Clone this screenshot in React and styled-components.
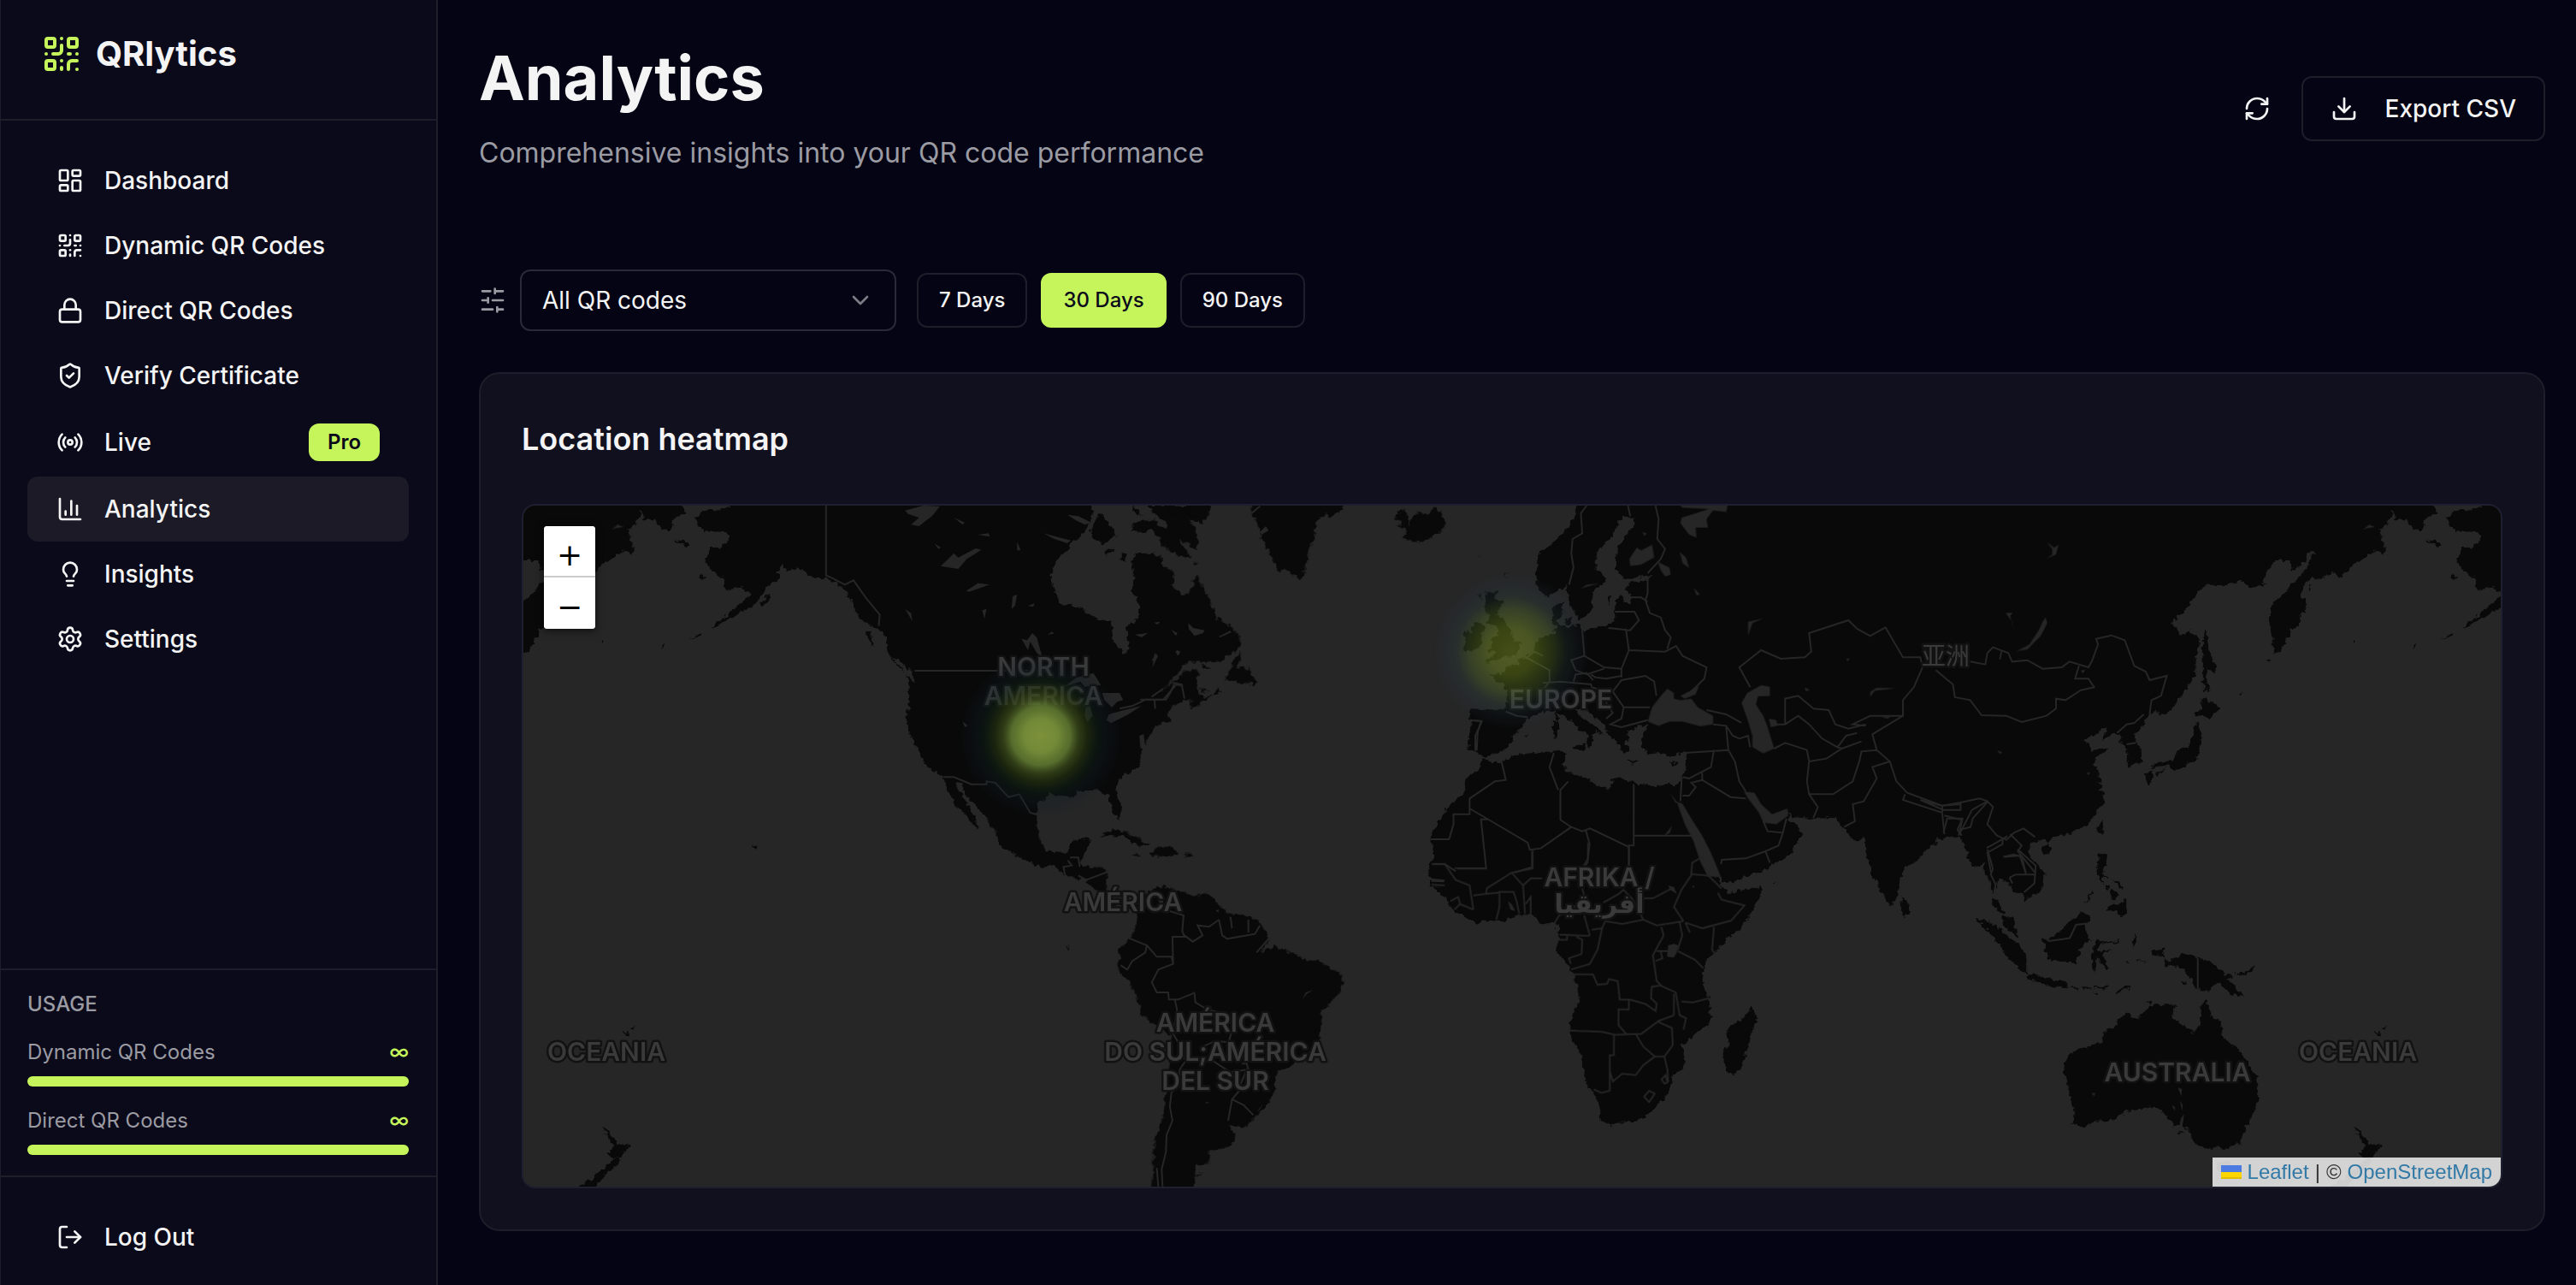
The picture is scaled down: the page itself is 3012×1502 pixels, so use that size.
import React, { useState } from 'react';
import styled, { createGlobalStyle, ThemeProvider } from 'styled-components';
import {
  ChartColumn,
  ChevronDown,
  Download,
  LayoutDashboard,
  Lightbulb,
  Lock,
  LogOut,
  QrCode,
  Radio,
  RefreshCw,
  Settings,
  ShieldCheck,
} from 'lucide-react';

const theme = {
  colors: {
    page: '#050414',
    sidebar: '#0b0a1a',
    card: '#11101f',
    active: '#1b1a26',
    line: '#1e1d2a',
    control: '#2a293b',
    text: '#f4f4f5',
    muted: '#9b9ba3',
    lime: '#c5f55a',
    ink: '#0b0a1a',
    sea: '#262626',
    land: '#090909',
    label: '#3a3a3a',
  },
  radius: '12px',
};

const GlobalStyle = createGlobalStyle`
  * {
    box-sizing: border-box;
    margin: 0;
  }

  body {
    background: ${theme.colors.page};
    color: ${theme.colors.text};
    font-family: Inter, sans-serif;
    font-size: 28px;
    line-height: 40px;
  }

  button,
  select {
    font: inherit;
    color: inherit;
    cursor: pointer;
  }

  a {
    color: inherit;
    text-decoration: none;
  }

  svg {
    flex-shrink: 0;
  }
`;

const Layout = styled.div`
  display: grid;
  grid-template-columns: 512px minmax(0, 1fr);
  min-height: 100vh;
`;

/* sidebar */

const Sidebar = styled.aside`
  display: flex;
  flex-direction: column;
  height: 100vh;
  background: ${props => props.theme.colors.sidebar};
  border-right: 2px solid ${props => props.theme.colors.line};
  box-shadow: inset 1px 0 0 ${props => props.theme.colors.line};
`;

const Brand = styled.header`
  display: flex;
  align-items: center;
  gap: 16px;
  height: 141px;
  padding: 0 48px 14px;
  border-bottom: 2px solid ${props => props.theme.colors.line};
  font-size: 40px;
  font-weight: 700;

  svg {
    color: ${props => props.theme.colors.lime};
  }
`;

const Nav = styled.nav`
  flex: 1;
  padding: 32px;
`;

const NavItem = styled.a`
  display: flex;
  align-items: center;
  gap: 24px;
  padding: 16px 32px;
  border: 2px solid transparent;
  border-radius: ${props => props.theme.radius};
  background: ${props => (props.$active ? props.theme.colors.active : 'none')};
  background-clip: border-box;
  font-weight: 500;
`;

const Badge = styled.span`
  margin-left: auto;
  padding: 0 22px;
  border-radius: ${props => props.theme.radius};
  background: ${props => props.theme.colors.lime};
  color: ${props => props.theme.colors.ink};
  font-size: 24px;
  font-weight: 600;
  line-height: 44px;
`;

const Usage = styled.section`
  display: grid;
  gap: 24px;
  padding: 24px 32px;
  border-top: 2px solid ${props => props.theme.colors.line};
  color: ${props => props.theme.colors.muted};
  font-size: 24px;
  line-height: 32px;
`;

const UsageTitle = styled.h2`
  font-size: 24px;
  font-weight: 500;
`;

const Meter = styled.div`
  display: grid;
  gap: 12px;
`;

const MeterRow = styled.div`
  display: flex;
  justify-content: space-between;
`;

const MeterValue = styled.span`
  color: ${props => props.theme.colors.lime};
  font-weight: 500;
`;

const Track = styled.div`
  height: 12px;
  border-radius: 6px;
  background: ${props => props.theme.colors.active};
`;

const Fill = styled.div`
  height: 100%;
  border-radius: inherit;
  background: ${props => props.theme.colors.lime};
`;

const Footer = styled.footer`
  padding: 32px 32px 18px;
  border-top: 2px solid ${props => props.theme.colors.line};
`;

/* main column */

const Main = styled.main`
  padding: 51px 36px 48px 48px;
`;

const Header = styled.header`
  display: flex;
  align-items: center;
  justify-content: space-between;
  margin-bottom: 112px;
`;

const Title = styled.h1`
  margin-bottom: 24px;
  font-size: 72px;
  font-weight: 700;
  line-height: 80px;
`;

const Subtitle = styled.p`
  color: ${props => props.theme.colors.muted};
  font-size: 32px;
  line-height: 48px;
`;

const Actions = styled.div`
  display: flex;
  align-items: center;
  gap: 16px;
`;

const IconButton = styled.button`
  display: flex;
  padding: 20px;
  border: 0;
  background: none;
`;

const ExportButton = styled.button`
  display: flex;
  align-items: center;
  gap: 32px;
  padding: 16px 32px;
  border: 2px solid ${props => props.theme.colors.line};
  border-radius: ${props => props.theme.radius};
  background: none;
  font-weight: 500;
`;

const Filters = styled.div`
  display: flex;
  align-items: center;
  gap: 16px;
  margin-bottom: 48px;
  color: ${props => props.theme.colors.muted};
`;

const SelectBox = styled.label`
  position: relative;
  width: 440px;
  margin-right: 8px;

  svg {
    position: absolute;
    top: 20px;
    right: 26px;
    opacity: 0.8;
    pointer-events: none;
  }
`;

const Select = styled.select`
  width: 100%;
  height: 72px;
  padding: 0 24px;
  appearance: none;
  border: 2px solid ${props => props.theme.colors.control};
  border-radius: ${props => props.theme.radius};
  background: ${props => props.theme.colors.page};
  color: ${props => props.theme.colors.text};
`;

const RangeButton = styled.button`
  height: 64px;
  padding: 0 24px;
  border: 2px solid
    ${props => (props.$active ? props.theme.colors.lime : props.theme.colors.line)};
  border-radius: ${props => props.theme.radius};
  background: ${props => (props.$active ? props.theme.colors.lime : 'none')};
  color: ${props =>
    props.$active ? props.theme.colors.ink : props.theme.colors.text};
  font-size: 24px;
  font-weight: 500;
`;

const Card = styled.section`
  padding: 48px;
  border: 2px solid ${props => props.theme.colors.line};
  border-radius: 24px;
  background: ${props => props.theme.colors.card};
`;

const CardTitle = styled.h2`
  margin-bottom: 48px;
  font-size: 36px;
  font-weight: 600;
  line-height: 56px;
`;

/* map */

const MapFrame = styled.div`
  position: relative;
  height: 800px;
  overflow: hidden;
  border: 2px solid #201f30;
  border-radius: 16px;
  background: ${props => props.theme.colors.sea};
`;

const MapSvg = styled.svg`
  display: block;
  width: 100%;
  height: 100%;

  .land {
    fill: ${props => props.theme.colors.land};
  }

  .water {
    fill: ${props => props.theme.colors.sea};
  }

  .borders {
    fill: none;
    stroke: ${props => props.theme.colors.sea};
    stroke-width: 2px;
  }

  .borders path {
    vector-effect: non-scaling-stroke;
  }
`;

const MapLabel = styled.text`
  fill: ${props => props.theme.colors.label};
  stroke: #121212;
  stroke-width: 5px;
  stroke-linejoin: round;
  paint-order: stroke;
  font-family: Inter, 'Noto Sans CJK SC', 'DejaVu Sans', sans-serif;
  font-size: ${props => (props.$light ? 28 : 30)}px;
  font-weight: ${props => (props.$light ? 400 : 600)};
  text-anchor: middle;
`;

const ZoomControl = styled.div`
  position: absolute;
  top: 24px;
  left: 24px;
  display: grid;
  width: 60px;
  overflow: hidden;
  border-radius: 4px;
  background: #fff;
  box-shadow: 0 2px 10px rgba(0, 0, 0, 0.65);
`;

const ZoomButton = styled.button`
  height: 60px;
  padding: 10px 0 0;
  border: 0;
  background: #fff;
  color: #000;
  font-family: 'DejaVu Sans', sans-serif;
  font-size: 36px;
  line-height: 48px;

  &:first-child {
    border-bottom: 2px solid #ccc;
  }
`;

const Attribution = styled.div`
  position: absolute;
  right: 0;
  bottom: 0;
  display: flex;
  align-items: center;
  gap: 7px;
  height: 34px;
  padding: 0 10px;
  background: rgba(255, 255, 255, 0.8);
  color: #333;
  font-family: 'Liberation Sans', sans-serif;
  font-size: 24px;

  a {
    color: #3179a6;
  }
`;

// Mercator world, 2048 units wide, digitised in sheets. Every sheet keeps
// its own grid and is placed in the world by its transform.
const sheets = [
  {
    id: 'north-america',
    transform: 'translate(600 580) scale(.5102 .33333)',
    land: `M500 33L480 45 440 50 415 75 435 120 490 122 497 150 475 180 450 180 440 230 455 260 480 290 485 330 520 320 540 330 545 345 530 365 500 405 453 462 475 450 520 410 560 370 580 320 610 290 615 275 603 268 617 238 627 262 650 250 670 270 690 285 720 290 740 305 765 340 785 400 800 440 825 455 850 480 855 510 862 560 890 600 905 635 908 700 903 770 905 820 925 880 945 945 985 985 1000 1040 1015 1090 1040 1120 1065 1172 1060 1140 1045 1090 1030 1050 1012 1005 1030 1010 1040 1055 1070 1100 1110 1160 1112 1220 1150 1255 1215 1300 1240 1290 1262 1330 1305 1330 1300 1270 1315 1240 1320 1200 1285 1205 1270 1250 1240 1260 1215 1235 1200 1190 1200 1110 1205 1075 1230 1045 1285 1055 1290 1035 1340 1030 1365 1050 1375 1110 1390 1130 1395 1090 1382 1040 1385 1000 1410 970 1440 935 1440 860 1460 830 1465 805 1485 790 1485 210 1455 200 1430 200 1415 230 1425 290 1415 330 1435 380 1435 420 1405 460 1412 530 1400 555 1375 500 1370 440 1340 435 1310 400 1275 378 1258 385 1240 330 1232 290 1245 225 1275 185 1278 160 1300 145 1320 100 1330 50 1325 20H500Z
      M1345 60L1365 100 1385 140 1365 150 1350 172 1330 150 1322 120Z
      M1420 95L1445 85 1465 110 1450 125 1420 125ZM1395 195L1404 205 1402 228 1395 222ZM1355 195L1368 180 1375 188 1360 210Z
      M1418 33L1440 65 1425 60ZM1450 33L1568 33 1568 90 1500 75 1480 60Z
      M423 283L435 275 443 288 430 291ZM372 155L388 155 405 172 400 178ZM565 375L588 345 592 352 572 388ZM808 472L818 475 826 527 815 510ZM862 565L885 575 915 620 922 658 905 630Z
      M405 505L430 478 434 485ZM335 530L350 522 345 530ZM200 505L208 507 205 511ZM548 1220L562 1232 556 1245ZM525 1198L530 1200ZM543 1210L548 1214ZM1415 1130L1422 1155ZM1425 1100L1430 1115Z
      M1345 1190L1375 1170 1400 1180 1460 1222 1428 1224 1405 1195Z`,
    water: `M898 50L940 33 978 35 960 70 930 105 912 100 930 75 905 62ZM980 245L1010 200 1020 215 1060 183 1073 188 1040 220 1020 255ZM1038 332L1065 305 1092 310 1065 325 1045 335ZM1165 500L1178 505 1190 480 1200 495 1213 565 1200 550 1185 510 1180 540ZM1263 668L1290 637 1330 620 1347 662 1310 668 1300 650ZM1312 740L1322 732 1328 770 1316 792 1310 770ZM1350 690L1390 690 1398 715 1385 720 1372 740 1355 715ZM1360 785L1365 765 1400 750 1440 735 1410 765 1370 796ZM1145 350L1155 345 1150 385 1142 395ZM1180 385L1195 375 1192 388ZM1075 400L1085 395 1080 430ZM965 165L980 180 975 185ZM1155 160L1163 190 1155 190ZM1065 135L1090 130 1092 142ZM1215 130L1278 155 1270 165 1240 150ZM1270 65L1295 70 1325 92 1310 100 1290 85ZM1425 485L1455 480 1440 495ZM1470 550L1478 560 1465 600ZM1520 540L1530 545 1523 555ZM1030 790L1042 805 1035 810ZM1435 840L1445 835 1448 870 1438 885ZM898 395L912 410 915 438ZM1225 485L1240 482 1235 475ZM1010 75L1035 92 1030 100ZM1215 100L1228 103ZM805 275L815 300Z`,
    borders: `M717 33V277L735 290 760 310 780 295 810 360 840 415 838 455M920 612H1180M1390 745L1420 735 1450 713H1490L1520 660 1535 665M985 985L1010 985 1050 1010H1085V1000L1105 1005 1135 1055 1160 1045 1185 1110 1205 1118`,
  },
  {
    id: 'north-atlantic',
    transform: 'translate(1340 580) scale(.33333)',
    land: `M-20 205L0 208 25 200 60 245 95 260 95 320 130 348 160 330 165 295 180 275 195 310 225 360 235 395 250 430 290 450 300 465 330 490V530L290 560 260 580H150L130 600 95 640 75 665 20 700 80 665 130 620 170 605 187 620 175 635 180 670 185 695 210 705 235 700 195 720 165 745 155 735 160 710 130 720 90 740 75 765 88 790 40 800 15 830 0 865H-20Z
      M15 50L35 33H68L75 50 100 75 90 33H135L150 85 170 110 183 150 180 190 150 170 110 150 155 205 155 222 110 205 70 185 40 140 20 115 0 118-20 100 0 88 30 80 40 100 70 110 75 90 50 80Z
      M145 20H238L215 65 198 102 175 75 155 60ZM165 232L182 230 175 240Z
      M368 20H697L690 45 640 75 630 60 600 85 590 120 592 150 570 185 563 220 555 260 545 293 515 280 490 250 465 262 440 215 425 185 405 150 398 110 385 75 370 55Z
      M870 80L890 60 885 45 910 50 920 75 918 100 940 65 960 55 985 65 1010 40 1035 55 1052 95 1030 125 1000 145 965 163 930 155 898 145 915 130 910 110 875 108 905 92 880 85Z
      M1190 340L1232 333 1220 360 1252 365 1248 385 1230 415 1255 430 1265 455 1283 475 1290 510 1312 510V530L1295 550 1300 555 1265 562 1235 570 1190 585 1215 560 1235 548 1197 540 1220 520 1210 495 1235 490 1230 455 1198 445 1205 420 1190 410V370Z
      M1118 470L1145 475 1140 455 1170 440 1187 460 1178 480 1180 520 1150 535 1120 545 1108 535 1125 510 1115 490ZM1165 345L1177 340 1172 360ZM1257 268L1265 272 1262 285ZM1163 206L1169 208 1166 213Z
      M330 545L335 550 320 600 365 605 370 625 385 650 378 670 365 655 330 655 273 645 285 620 300 600 310 570ZM185 590L210 595 230 608 205 605ZM235 698L252 668 262 690ZM188 672L220 683 200 686Z`,
    water: `M60 90L75 100 72 115 60 105ZM255 492L295 472 300 477 260 495ZM148 445L165 462 205 470 200 480 170 490 150 465ZM88 468L110 480 105 490ZM28 443L50 440 40 450ZM5 405L20 412ZM103 545L111 540 120 548 112 560ZM20 575L38 550 30 580ZM118 268L125 268 122 276ZM20 815L50 803 30 812ZM400 125L420 105 430 120 405 135Z`,
    borders: `M-20 713H70L85 690 100 655 125 660 135 710M30 715L32 745M20 703L60 675M370 60L400 35M1135 785L1175 788 1163 830 1160 892`,
  },
  {
    id: 'south-america',
    transform: 'translate(1100 960) scale(.38265 .33333)',
    land: `M140-10L178 55 180 85 230 120 310 163 340 150 380 190 440 205 475 240 500 275 530 300 560 298 597 320V375L575 410 545 450 550 480 540 505V530L575 560 610 650 615 680 655 715 705 750 700 850 685 960 680 1040 652 1120 650 1210 642 1290H775L778 1200 800 1205 820 1198V1158L885 1140 903 1105 880 1062 930 1072 960 1035 1000 990 1023 945V900L1030 880 1080 850 1130 805 1155 775 1165 710V660L1175 655 1215 605 1228 570 1220 525 1195 520 1155 488 1110 482 1080 465 1020 438 975 458 1003 410 985 370 965 345 930 333 890 325 850 300 840 275 820 258 775 262 720 240 680 228 630 250 600 290 570 285 530 285 505 255 508 180 490 160H425L435 120 445 100 455 60 405 65 388 110H325L300 60 293-10Z
      M490 48L525 28 570 40 640 82 595 85 565 50 520 38ZM640 113L665 90 700 90 728 112 685 125 645 118ZM582 116L600 115 612 123 595 124ZM746 115L770 117 765 122 748 121ZM385 432L395 448 387 452ZM780 1240L800 1230 785 1248ZM85-5L115 15 115 30ZM585 0L590 15Z`,
    water: `M840 312L850 310 848 320ZM1105 625L1115 600 1138 592 1118 605ZM1005 505L1017 525ZM808 984L822 986 812 990ZM660 265L678 255 680 285 668 285ZM985 990L975 1010 965 1020ZM1070 750L1077 765Z`,
    borders: `M395 127H420L425 160M420 190L445 205 508 178M380 190L375 160 400 155 388 137M440 205L445 212
      M575 410L630 435 660 475 705 475 710 500 665 520 645 565 660 600 695 600 697 625 725 625 775 602 778 635 815 660 850 670M700 315L742 330 738 385 745 405H708L710 500M745 400L770 422 800 400 785 365 820 370 850 345M850 345L860 400 875 412 960 395 975 365M885 335L890 375M940 345V390M550 505L570 520 585 490 625 460 630 435M715 625L722 660 710 745 728 780 748 840 730 870 728 930 705 950 700 1000 708 1050 690 1100 688 1160 675 1220 678 1285M800 790L840 770 880 775 888 740M825 835L885 880 940 870 935 850 920 850M935 870L915 925M912 945L890 975 925 995 955 1030M890 975L878 1050M1003 410L965 460M660 1215L665 1285`,
  },
  {
    id: 'eurasia',
    transform: 'translate(1600 580) scale(.5102 .33333)',
    land: `M475 20V60L450 120 430 160 400 190 387 210 385 310 400 345 412 352 430 335 455 315 460 370 475 410 480 430 495 425 510 400 515 340 530 310 545 300V285L525 260 522 210 530 185 555 150 570 100 580 70 605 75 610 100 590 140 570 180 568 250 580 285 600 290 650 275 640 290 595 305 590 330 605 350 600 380 590 370 580 345 565 370V430L545 455 490 470 480 450 455 460 440 455 430 440 445 410 447 370 430 380 420 400 425 440 430 460 425 480 410 490 390 500 385 530 370 555 350 570 340 590 315 600 312 620 280 625 285 640 310 655 320 690 312 750 235 745 230 760 237 800 230 850 228 890 245 892 255 905 270 915 285 905 310 895 325 870 330 845 365 790 367 775 400 755 430 755 450 770 480 810 503 838 500 865 505 878 517 855 512 840 520 825 540 835 520 808 485 770 475 745 490 735 510 765 540 800 550 830 555 850 575 870 585 905 598 890 585 860 600 850 590 830 605 815 630 800 645 800 635 820 625 850 630 880 640 905 665 900 690 910 725 895 730 905 725 950 715 1000 700 1015 690 1010 655 1018 610 1005 575 985 555 1000 550 1030 530 1020 500 990 455 970 445 940 455 905 440 890 380 900 340 905 310 930 275 930 262 920 250 960 225 985 220 1040 190 1080 165 1130 140 1200 150 1230V1270L138 1300 135 1335H870L905 1300 940 1270 975 1230 995 1180 965 1155 962 1100 970 1125 1010 1130 1070 1128 1085 1150 1105 1200 1120 1212 1137 1185 1142 1240 1155 1335H1225V1300L1260 1260 1300 1220 1305 1195 1330 1190 1355 1195 1380 1240 1383 1300 1400 1295 1420 1280 1425 1335 1440 1330V20Z
      M423 790L435 785 438 820 432 850 424 845ZM428 765L434 760 436 780 431 786ZM468 873L498 872 494 898 470 885ZM592 925L620 935 600 937ZM690 938L712 930 700 945ZM450 430L465 425 462 445 450 450ZM355 838L366 835 362 842ZM143 1070L150 1072ZM165 1075L172 1065ZM548 355L555 345 552 380ZM538 385L542 375Z`,
    water: `M640 790L650 740 670 700 685 675 700 690V710L715 715 740 710 755 740 790 770V800L760 807 720 790 690 790 665 805ZM715 700L758 665 750 695 725 710ZM855 725L868 690 900 663 920 668V700L893 702 888 730 905 770 915 810 925 860 930 885 905 902 880 880V840L868 780ZM918 780L935 785 938 805 922 810ZM860 1035L885 1040 900 1080 925 1115 960 1095 962 1120 935 1150 905 1145 895 1110 870 1060ZM706 1070L720 1078 740 1130 765 1190 785 1250 808 1335H778L760 1280 745 1210 725 1150ZM690 1038L704 1075 710 1078ZM705 20H825L820 55 790 50 775 80 778 110 750 110 752 145 735 135 715 95 718 75 750 60 780 45 720 40ZM663 230L690 250 693 275 680 282 670 260ZM713 195L728 215 735 252 720 235ZM745 320L760 345 752 348ZM870 490V440L905 428 880 445ZM1150 705V685L1165 672 1210 673 1160 682ZM1095 570L1103 568 1098 580ZM1440 890L1452 900 1445 900ZM685 600L698 610ZM598 220L615 180 625 190 650 170 655 215 625 240 600 245ZM628 125L638 130 632 140ZM1000 670L1012 680 1002 684ZM1175 775L1200 770 1190 780ZM485 325L500 310 530 305 495 320Z`,
    borders: `M500 33L487 60 490 130 468 150 465 200 470 250 460 310M595 33L600 70M658 33L665 80 662 150 680 185 670 220 640 270M640 290V340L635 365 645 410M600 355L625 355 640 370M565 405H610L620 435 600 470 550 462M645 410L670 425 680 470 693 495 685 535M590 465L597 540 580 605 580 635M597 540L680 545 705 525 720 560 775 600 770 640 740 685M490 470L495 560 465 575 475 610 500 625M495 560L540 600 580 605M500 625L540 605M510 625L520 635 545 640 580 630M355 560L415 610V650L400 680 410 720M360 570L380 545 400 560M400 655L440 650 510 660 515 680M470 650L475 625 500 620 515 645M515 670L545 690 560 685 580 645 635 630 655 650 660 700M560 685L585 740 645 740M585 740L580 780 555 800 580 810 640 785M515 690L540 710 560 760 545 780M315 755L340 770 365 775M235 785L260 790 245 840V892M775 750L820 765 855 795M790 800L820 805 835 840 850 850M820 810L825 890M725 900L825 890 840 930 850 1000 865 1035M792 890L785 950 735 990 720 985M765 970V995L830 1055 865 1060M720 1050H735L750 1020 740 1005 765 995M718 985L715 1070M850 850L870 840 875 880M930 885L955 865 1005 890 1010 930 1005 1000 1010 1045 1030 1090 1020 1128M1010 1045L1065 1045 1110 1000 1125 930 1130 895 1165 890M1010 930L1050 920 1085 885 1130 860M955 800V710L985 700 1020 745 1055 750 1070 800 1100 815 1140 800M930 800L955 800 985 770 1010 800 1040 850 1075 880 1095 840 1120 830M1085 885L1075 880M1195 930L1155 950 1165 990 1135 1070 1110 1080 1115 1140 1090 1160M875 670L850 600 900 540 945 570 1000 565 1015 545 1010 480 1100 435 1120 465 1150 490 1185 460 1225 565 1265 565 1270 600 1250 670 1225 715V770L1150 770 1110 800 1140 805M1225 770L1155 835 1165 890 1195 930 1210 1000 1235 1040 1315 1085 1355 1075 1400 1060 1420 1070M1230 1045L1225 1065 1315 1110V1085M1315 1110L1320 1185M1320 1120L1360 1135 1350 1170 1360 1190M1420 1070L1385 1130 1380 1160 1355 1170M905 1140L915 1175 950 1180 940 1225 910 1245 865 1270 810 1275 808 1290M910 1245L920 1285M950 1180L958 1130M305 930L315 995 290 1000 232 1060V1115H195V1150L185 1203H142M232 1095L365 1215 370 1240 395 1235 465 1160 440 1135 440 1030 458 1000M425 900L415 950 435 1030M608 1010V1225H597V1320M608 1190H742M597 1230L508 1165 490 1175 465 1160M498 1170L507 1220 502 1285 485 1320M375 1245V1300L335 1320M275 1133H258L270 1306H205M150 1290L175 1290 200 1315`,
  },
  {
    id: 'africa',
    transform: 'translate(1600 960) scale(.44643 .33333)',
    land: `M215-10L165 60 172 130 157 180 165 225 205 275 215 300 245 330 280 358 315 348 350 352 395 328H435L450 358H490L500 375 495 430 490 450 515 495 535 530 547 575 552 635 537 665 527 715 528 745 560 830 563 870 575 930 590 950 610 1010 608 1045 628 1068 660 1055 700 1052 725 1040 765 985 790 940 797 890 828 865V820L820 785 860 740 880 725 896 695 893 620 880 590 875 535 890 480 910 455 945 405 970 380 1000 330 1025 265 1028 232 985 240 945 253 930 235 915 205 880 165 855 110 850 50 830-10Z
      M855-10L885 60 905 95 920 140 928 215 945 215 1040 170 1110 110 1115 75 1138 45 1120 10 1100-10ZM1235-10L1262 50 1285 70 1300 50 1305 110 1345 260 1365 295 1380 280 1392 230 1398 165 1425 150 1485 65 1505 45H1568V-10Z
      M1398 265L1415 290 1418 325 1402 333 1393 310ZM1005 645L1018 700 1008 720 1000 770 975 870 955 885 937 875 928 825 942 780 937 740 945 715 985 690ZM1057 217L1070 219 1062 222ZM1080 800L1087 805ZM1108 785L1112 790ZM485 375L492 373 488 380Z`,
    water: `M785 435L800 430 812 435 808 460 800 478 782 475ZM365 280L375 290 385 315 372 310ZM775 50L795 15 790 40ZM848 225L855 228 850 234ZM165 200L200 205 198 214 165 212ZM165 225L195 235 180 232ZM785 225L800 230 808 255 790 240ZM792 408L803 410Z`,
    borders: `M430 100V165L375 180 310 235 308 255M307 165H225M165 150L200 150 228 205 265 225 275 310M275 260L305 255 340 250M343 250V300L335 345M340 247H380L388 280 395 325M375 180L405 225 410 325M425 325V265L412 290M405 225L425 200 455 200M165 222L200 225M215 280L235 265 240 290 225 310M240 290L275 310M575 75V130L560 165M682 90V180M560 235L565 260 550 290 500 330 488 355M565 330L580 400M500 397L580 402M495 415H520V400M545 405L560 415 558 465 525 480 530 500M612 375L600 450 580 500 530 520M585 380L612 375 620 350 665 360 720 345 755 365 825 350M615 285L655 255 668 240 690 270 720 345M720 270L745 270 795 235M825 350L800 300 820 240 845 190 848 145 875 125M845 185L890 190 925 235M915 250L925 275 985 295 950 348 875 375 830 355M905 370L900 450 907 465M815 355L822 400 810 450M767 370L773 400 745 470 755 560 768 578 805 600M830 355L842 390M810 455L855 485 877 515M755 455H785M752 490L770 480 765 455M537 537H588L600 573 625 570 630 553 653 560 658 625 685 625 725 640 752 665 755 640 740 620 742 580 768 575M682 628V660H655V715L675 745M525 733L548 735 610 738 645 748 715 745 760 700 800 680M643 750V820H632V945L610 952 590 940M632 875L640 912 665 885 700 890 720 855 750 825 775 825 797 785 795 725 762 705V695M700 745L720 790 750 825M775 825L783 870 785 915M735 945L750 955 735 985 722 965ZM768 905L778 890 783 915 775 920ZM805 600L815 680 832 690 825 730M820 632L850 635 893 620M800 605V680`,
  },
  {
    id: 'east-asia',
    transform: 'translate(2250 580) scale(.44643 .33333)',
    land: `M-20 20H1325L1345 60 1310 80V100L1302 125 1270 105 1260 82 1235 82 1225 50 1220 85 1200 112 1190 115 1195 130 1207 185 1205 203 1180 190 1150 215 1125 238 1105 270 1092 287 1083 270 1065 267 1040 290 1020 287 1003 300 988 330 985 350 998 362 999 410 988 405 983 455 960 465 958 498 945 500 935 535 918 558 908 480 904 440 905 400 920 365 945 340 975 290 1005 250 1012 210 1027 200 1015 192 1003 197 998 230 963 263 960 225 920 225 905 250 890 285 887 305 897 312 850 322 848 312 825 295 810 310 745 308 730 320 710 350 695 380 670 415 645 450 665 458 670 487 685 488 690 470 712 485 722 505 720 530 712 560 710 630 690 670 670 710 645 750 620 767 605 752 590 765 575 790 572 810 548 840 555 865 568 885 570 930 550 940 535 948 530 930 532 890 520 870 512 860 517 845 510 835 495 833 465 855 480 815 465 812 455 830 430 845 418 860 430 870 438 890 480 885 478 895 455 910 438 940 452 955 460 985 470 1005 455 1000 470 1020 455 1030 473 1040 470 1070 450 1110 435 1140 410 1165 370 1180 325 1205 322 1220 315 1200 290 1195 270 1215 268 1240 280 1265 300 1300 320 1330H160L155 1278 135 1300 122 1295V1250L100 1215 90 1180 60 1190 30 1195 20 1220 0 1240-20 1250Z
      M738 465L748 540 765 618 740 610V650L750 685 738 675 730 690V600L728 500ZM728 703L775 745 745 780 725 765 710 775 705 765 725 750ZM712 790L728 840 718 890 712 930 690 940 655 965 645 945 590 955 610 930 650 925 665 890 690 880 705 840ZM575 970L600 965V985L587 1015 578 985ZM608 970L635 953 612 978ZM773 742L785 728ZM800 720L812 708ZM825 695L838 685 828 698ZM1318 153L1340 158 1357 172 1345 172 1335 162 1320 162ZM1005 325L1018 315 1010 333ZM898 580L908 568 903 582ZM1034 437L1043 453ZM1120 505L1128 508ZM473 1130L465 1188 450 1165ZM458 1250L480 1255 475 1300 468 1335 450 1330ZM306 1232L325 1222 333 1232 325 1255 312 1257ZM530 968L537 969ZM547 1110L555 1100Z`,
    water: `M318 425L322 445 305 490 270 537 242 543 275 520 300 470 310 440ZM213 410L232 408 225 420 240 495 230 440ZM320 160L340 180 352 170 345 205 318 220 335 205 335 185ZM192 892L205 898 198 903ZM410 610L422 610 415 622ZM425 970L435 968 430 978ZM92 640L102 632ZM70 1022L80 1024ZM1148 118L1165 100 1182 108 1160 112Z`,
    borders: `M120 580L160 590 165 550 180 530 220 550 230 580 270 575 310 605 360 600 380 580 430 600 440 575 455 520 450 500 490 488 525 505 550 595 580 615 590 645 635 630 620 700 595 715 590 765M30 610L75 660 80 705 120 715 150 768 215 770 255 792 320 770 345 745V710L370 715 410 680 445 670 430 640 395 640 405 595M198 572L202 545M505 830L530 800 550 795 575 765M530 870L555 865M125 1100L165 1070 180 1090 165 1150 190 1190 215 1205 235 1180 260 1165 290 1195M205 1200V1220L165 1250 175 1320M210 1265L250 1260 265 1320M225 1185L255 1225 245 1245 290 1320M90 1190L100 1130 60 1130 50 1180M-10 1065L45 1085 95 1080 95 1100 50 1100ZM125 1100L90 1190`,
  },
  {
    id: 'oceania',
    transform: 'translate(2250 960) scale(.48597 .34566)',
    land: `M-5-10V95L25 65 60 50 80 45 95 75 112 150 125 155 143 130 155 200 165 240 160 275 185 310 190 355 225 392 215 330 190 310 180 275 165 260 178 195 205 210 215 240 240 245 237 275 280 235 288 205 285 175 255 120 250 80 275 60 300 70V60L350 40 380 20 400-10Z
      M122 327L150 335 200 385 230 420 248 465 247 515 225 495 185 430 160 380ZM245 518L270 520 345 550 347 562 300 555 250 535ZM350 556L370 558 372 565 352 562ZM378 560L400 560 398 566 380 566ZM405 560L448 556 440 565 408 565ZM457 588L475 565 497 557 470 580ZM402 575L420 583 415 588ZM283 395L310 395 345 345 380 305 402 330 385 350 398 400 375 430 365 485 330 470 300 470 290 430Z
      M412 405L465 408 473 393 470 412 420 412V440L452 432 428 450 447 500 440 505 425 480 415 455 412 510H405L402 465ZM545 435L575 430 580 470 590 475 620 445 680 470 725 515 740 528 730 532 770 595 735 580 705 545 685 572 655 570 640 525 620 500 580 485 575 455 550 450ZM620 545L632 540 628 556ZM745 512L770 512 795 490 792 505 765 523ZM775 463L798 490 790 480ZM822 512L832 530ZM842 532L850 542ZM868 545L878 555ZM880 575L890 580ZM890 560L893 575ZM898 590L907 598ZM508 378L510 410 503 430 502 395ZM485 473L498 475 488 480ZM505 470L540 472 510 474ZM250 455L240 460ZM268 465L272 470ZM128 372L136 376ZM148 398L153 408ZM165 435L168 445ZM543 550L548 538ZM580 530L583 510ZM94 227L97 195ZM383 278L405 240 408 245 395 265ZM725 453L733 454Z
      M415 175L450 190 430 190 430 215ZM435 215L445 212 440 235ZM455 195L475 215 478 235 465 220ZM450 228L470 245 455 268 445 245ZM485 260L488 310 475 325 460 300 437 303 445 285 465 285Z
      M345 795L370 770 425 750 440 700 455 705 470 665 490 650 505 665 520 660 545 620 605 620 598 665 650 715 662 690 668 620 677 600 690 655 710 670 720 735 755 770 775 810 800 860 805 915 795 980 775 1030 762 1090 720 1112 705 1100 690 1112 650 1090 640 1050 625 1030 600 1030 580 990 545 965 485 980 455 1012 410 1015 380 1037 355 1020 362 985 345 895 335 830ZM530 610L550 607 545 615ZM607 1050L625 1047 615 1055ZM700 1150L740 1150 732 1195 715 1205Z
      M1032 1025L1055 1060 1065 1075 1070 1095 1097 1090 1090 1115 1078 1140 1045 1130 1060 1100 1040 1050ZM1065 1138L1078 1145 1070 1160 1040 1200 1010 1245H965L990 1225 1040 1170ZM1084 714L1097 712 1095 724 1086 722ZM1098 700L1117 690 1105 702ZM958 665L963 680ZM966 685L971 693ZM1202 643L1207 647ZM1369 55L1376 60Z`,
    water: `M595 960L603 965V980ZM615 945L622 960 620 980ZM612 1045L617 1005 625 990 620 1040ZM610 900L620 905 618 930ZM510 800L520 795ZM402 920L412 918 408 930ZM222 195L232 210ZM512 690L516 697ZM642 945L645 960Z`,
    borders: `M150 90L170 75 200 50M152 95L165 160 160 180 172 215 165 260M190 120L215 112 235 120 245 180M205 190L220 180 265 180M205 190L212 210M225 95L268 150 265 210 240 240M180 310L200 320M290 395L300 405 350 395 365 350 395 345M658 463V568`,
  },
];

const labels = [
  { text: 'NORTH', x: 1220, y: 790 },
  { text: 'AMERICA', x: 1220, y: 824 },
  { text: 'EUROPE', x: 1825, y: 828 },
  { text: '亚洲', x: 2275, y: 777, light: true },
  { text: 'AFRIKA /', x: 1870, y: 1036 },
  { text: 'أفريقيا', x: 1870, y: 1067 },
  { text: 'AMÉRICA', x: 1313, y: 1065 },
  { text: 'AMÉRICA', x: 1421, y: 1206 },
  { text: 'DO SUL;AMÉRICA', x: 1421, y: 1240 },
  { text: 'DEL SUR', x: 1421, y: 1274 },
  { text: 'AUSTRALIA', x: 2546, y: 1264 },
  { text: 'OCEANIA', x: 2757, y: 1240 },
  { text: 'OCEANIA', x: 709, y: 1240 },
];

const navItems = [
  { label: 'Dashboard', icon: LayoutDashboard },
  { label: 'Dynamic QR Codes', icon: QrCode },
  { label: 'Direct QR Codes', icon: Lock },
  { label: 'Verify Certificate', icon: ShieldCheck },
  { label: 'Live', icon: Radio, badge: 'Pro' },
  { label: 'Analytics', icon: ChartColumn, active: true },
  { label: 'Insights', icon: Lightbulb },
  { label: 'Settings', icon: Settings },
];

const usage = [
  { label: 'Dynamic QR Codes', value: '∞', percent: 100 },
  { label: 'Direct QR Codes', value: '∞', percent: 100 },
];

const ranges = [7, 30, 90];

const SlidersIcon = () => (
  <svg
    width="32"
    height="32"
    viewBox="0 0 24 24"
    fill="none"
    stroke="currentColor"
    strokeWidth="2"
    strokeLinecap="round"
    aria-hidden="true"
  >
    <path d="M21 4h-7M10 4H3M21 12h-9M8 12H3M21 20h-5M12 20H3M14 2v4M8 10v4M16 18v4" />
  </svg>
);

const Layer = ({ kind, filter }) => (
  <g className={kind} filter={filter}>
    {sheets.map(sheet => (
      <g key={sheet.id} transform={sheet.transform}>
        <path d={sheet[kind]} />
      </g>
    ))}
  </g>
);

const WorldMap = () => (
  <MapSvg
    viewBox="612 591 2312 796"
    preserveAspectRatio="xMidYMid slice"
    role="img"
    aria-label="World map of scans"
  >
    <defs>
      <filter
        id="coast"
        filterUnits="userSpaceOnUse"
        x="500"
        y="560"
        width="2560"
        height="860"
        colorInterpolationFilters="sRGB"
      >
        <feTurbulence type="fractalNoise" baseFrequency="0.16" numOctaves="2" seed="4" />
        <feDisplacementMap
          in="SourceGraphic"
          scale="8"
          xChannelSelector="R"
          yChannelSelector="G"
        />
      </filter>
      <radialGradient id="heat-strong">
        <stop offset="0" stopColor="#80933b" stopOpacity="0.98" />
        <stop offset="0.2" stopColor="#77903a" stopOpacity="0.96" />
        <stop offset="0.36" stopColor="#617a32" stopOpacity="0.88" />
        <stop offset="0.46" stopColor="#42541e" stopOpacity="0.7" />
        <stop offset="0.56" stopColor="#2a3a12" stopOpacity="0.6" />
        <stop offset="0.7" stopColor="#12261c" stopOpacity="0.4" />
        <stop offset="0.82" stopColor="#102028" stopOpacity="0.28" />
        <stop offset="1" stopColor="#102028" stopOpacity="0" />
      </radialGradient>
      <radialGradient id="heat-mild">
        <stop offset="0" stopColor="#7f9428" stopOpacity="0.5" />
        <stop offset="0.3" stopColor="#76901f" stopOpacity="0.44" />
        <stop offset="0.54" stopColor="#58742a" stopOpacity="0.34" />
        <stop offset="0.7" stopColor="#2c4840" stopOpacity="0.26" />
        <stop offset="0.84" stopColor="#283c48" stopOpacity="0.16" />
        <stop offset="1" stopColor="#283c48" stopOpacity="0" />
      </radialGradient>
      <g id="world">
        <Layer kind="land" filter="url(#coast)" />
        <Layer kind="water" />
        <Layer kind="borders" />
      </g>
    </defs>

    <use href="#world" x="-2048" />
    <use href="#world" x="2048" />
    <use href="#world" />

    {labels.map(({ text, x, y, light }) => (
      <MapLabel key={`${text}-${x}-${y}`} x={x} y={y} $light={light}>
        {text}
      </MapLabel>
    ))}

    <circle cx="1217" cy="860" r="96" fill="url(#heat-strong)" />
    <circle cx="1767" cy="761" r="92" fill="url(#heat-mild)" />
  </MapSvg>
);

const App = () => {
  const [range, setRange] = useState(30);

  return (
    <ThemeProvider theme={theme}>
      <GlobalStyle />
      <Layout>
        <Sidebar>
          <Brand>
            <QrCode size={48} />
            QRlytics
          </Brand>
          <Nav>
            {navItems.map(({ label, icon: Icon, badge, active }) => (
              <NavItem key={label} href="#" $active={active}>
                <Icon size={32} />
                {label}
                {badge && <Badge>{badge}</Badge>}
              </NavItem>
            ))}
          </Nav>
          <Usage>
            <UsageTitle>USAGE</UsageTitle>
            {usage.map(({ label, value, percent }) => (
              <Meter key={label}>
                <MeterRow>
                  <span>{label}</span>
                  <MeterValue>{value}</MeterValue>
                </MeterRow>
                <Track>
                  <Fill style={{ width: `${percent}%` }} />
                </Track>
              </Meter>
            ))}
          </Usage>
          <Footer>
            <NavItem href="#">
              <LogOut size={32} />
              Log Out
            </NavItem>
          </Footer>
        </Sidebar>

        <Main>
          <Header>
            <div>
              <Title>Analytics</Title>
              <Subtitle>
                Comprehensive insights into your QR code performance
              </Subtitle>
            </div>
            <Actions>
              <IconButton type="button" aria-label="Refresh">
                <RefreshCw size={32} />
              </IconButton>
              <ExportButton type="button">
                <Download size={32} />
                Export CSV
              </ExportButton>
            </Actions>
          </Header>

          <Filters>
            <SlidersIcon />
            <SelectBox>
              <Select aria-label="QR code" defaultValue="all">
                <option value="all">All QR codes</option>
              </Select>
              <ChevronDown size={32} />
            </SelectBox>
            {ranges.map(days => (
              <RangeButton
                key={days}
                type="button"
                $active={days === range}
                onClick={() => setRange(days)}
              >
                {days} Days
              </RangeButton>
            ))}
          </Filters>

          <Card>
            <CardTitle>Location heatmap</CardTitle>
            <MapFrame>
              <WorldMap />
              <ZoomControl>
                <ZoomButton type="button" aria-label="Zoom in">
                  +
                </ZoomButton>
                <ZoomButton type="button" aria-label="Zoom out">
                  −
                </ZoomButton>
              </ZoomControl>
              <Attribution>
                <svg width="24" height="16" viewBox="0 0 12 8" aria-hidden="true">
                  <path fill="#4C7BE1" d="M0 0h12v4H0z" />
                  <path fill="#FFD500" d="M0 4h12v3H0z" />
                  <path fill="#E0BC00" d="M0 7h12v1H0z" />
                </svg>
                <a href="#">Leaflet</a>
                <span>|</span>
                <span>©</span>
                <a href="#">OpenStreetMap</a>
              </Attribution>
            </MapFrame>
          </Card>
        </Main>
      </Layout>
    </ThemeProvider>
  );
};

export default App;
